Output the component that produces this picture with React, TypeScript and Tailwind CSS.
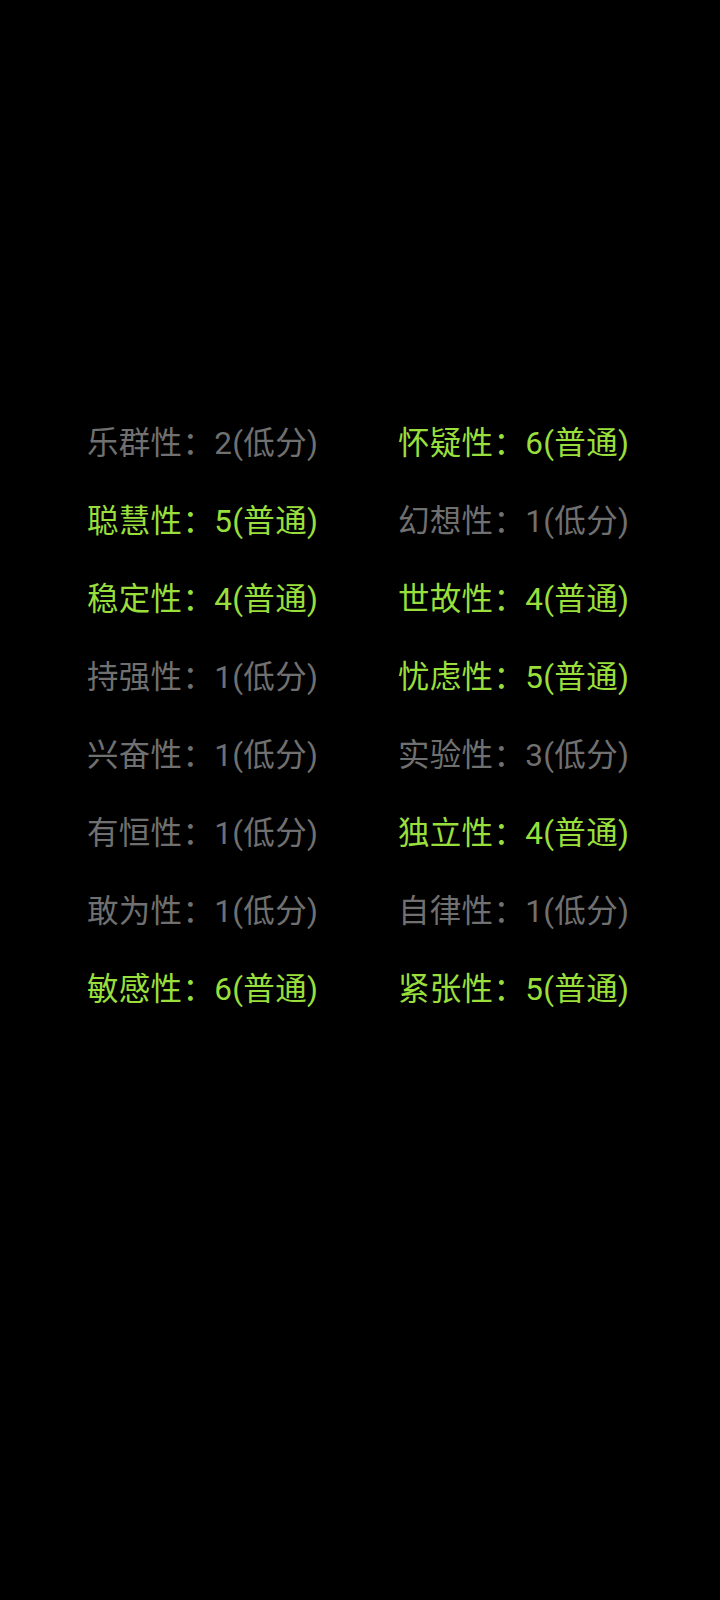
import React from 'react';

type Trait = { name: string; score: number; level: string };

const rows: [Trait, Trait][] = [
  [{ name: '乐群性', score: 2, level: '低分' }, { name: '怀疑性', score: 6, level: '普通' }],
  [{ name: '聪慧性', score: 5, level: '普通' }, { name: '幻想性', score: 1, level: '低分' }],
  [{ name: '稳定性', score: 4, level: '普通' }, { name: '世故性', score: 4, level: '普通' }],
  [{ name: '持强性', score: 1, level: '低分' }, { name: '忧虑性', score: 5, level: '普通' }],
  [{ name: '兴奋性', score: 1, level: '低分' }, { name: '实验性', score: 3, level: '低分' }],
  [{ name: '有恒性', score: 1, level: '低分' }, { name: '独立性', score: 4, level: '普通' }],
  [{ name: '敢为性', score: 1, level: '低分' }, { name: '自律性', score: 1, level: '低分' }],
  [{ name: '敏感性', score: 6, level: '普通' }, { name: '紧张性', score: 5, level: '普通' }],
];

const TraitCell: React.FC<{ trait: Trait }> = ({ trait }) => {
  const normal = trait.level === '普通';
  return (
    <div
      className={`text-[31.5px] tracking-[0.3px] leading-none whitespace-nowrap ${
        normal ? 'text-[#99df3c]' : 'text-[#707070]'
      }`}
    >
      {trait.name}：{trait.score}({trait.level})
    </div>
  );
};

export default function App() {
  return (
    <div
      className="w-[720px] h-[1600px] bg-black pt-[405px] pl-[87px]"
      style={{ fontFamily: 'Roboto, "Noto Sans CJK SC", sans-serif' }}
    >
      <div className="flex flex-col">
        {rows.map(([a, b], i) => (
          <div key={i} className="grid grid-cols-[311px_1fr] items-center h-[78px]">
            <TraitCell trait={a} />
            <TraitCell trait={b} />
          </div>
        ))}
      </div>
    </div>
  );
}
